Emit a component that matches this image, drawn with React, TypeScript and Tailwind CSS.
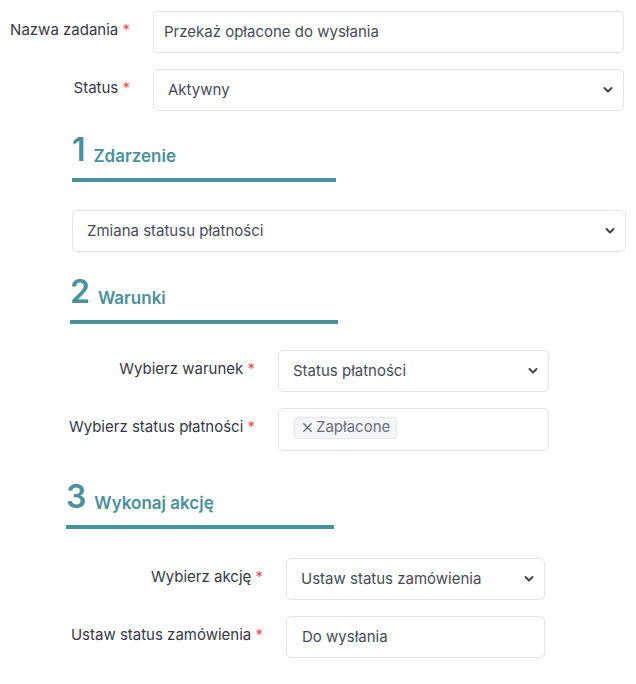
import { ReactNode } from 'react'

const Chevron = () => (
  <svg width="10" height="7" viewBox="0 0 10 7" className="pointer-events-none absolute right-[10px] top-1/2 -translate-y-1/2">
    <path d="M1.5 1.5 L5 5 L8.5 1.5" fill="none" stroke="#3f4350" strokeWidth="2" strokeLinecap="round" strokeLinejoin="round" />
  </svg>
)

function SelectBox({ value, className = '' }: { value: string; className?: string }) {
  return (
    <div className={`relative h-[42px] rounded-[5px] border border-[#e3e3eb] bg-white ${className}`}>
      <div className="flex h-full items-center pl-[14px] text-[#474a57]">{value}</div>
      <Chevron />
    </div>
  )
}

function InputBox({ value, pl = 'pl-[10px]' }: { value: string; pl?: string }) {
  return (
    <div className={`flex h-[42px] items-center rounded-[5px] border border-[#e3e3eb] bg-white ${pl} text-[#474a57]`}>
      {value}
    </div>
  )
}

function Row({ label, labelW, fieldW, children }: { label: string; labelW: string; fieldW: string; children: ReactNode }) {
  return (
    <div className="flex">
      <div className={`${labelW} shrink-0 pr-[23px] pt-[8px] text-right text-[#373743]`}>
        {label} <span className="text-[#f04c4c]">*</span>
      </div>
      <div className={fieldW}>{children}</div>
    </div>
  )
}

function Heading({ num, title, left, bar }: { num: string; title: string; left: string; bar: string }) {
  return (
    <div className={left}>
      <div className="flex items-end gap-[8px] text-[#4a9199]">
        <span className="text-[32px] font-semibold leading-none">{num}</span>
        <span className="pb-[1px] text-[17px] font-semibold leading-none">{title}</span>
      </div>
      <div className={`mt-[12px] h-[4px] ${bar} bg-[#4a9199]`} />
    </div>
  )
}

export default function App() {
  return (
    <div className="w-[636px] min-h-[684px] bg-white pt-[11px] font-['Inter',sans-serif] text-[15px]">
      <Row label="Nazwa zadania" labelW="w-[153px]" fieldW="w-[471px]">
        <InputBox value="Przekaż opłacone do wysłania" />
      </Row>
      <div className="mt-[16px]">
        <Row label="Status" labelW="w-[153px]" fieldW="w-[471px]">
          <SelectBox value="Aktywny" />
        </Row>
      </div>

      <div className="mt-[23px]">
        <Heading num="1" title="Zdarzenie" left="ml-[72px]" bar="w-[264px]" />
      </div>
      <div className="relative ml-[72px] mt-[28px] w-[554px]">
        <SelectBox value="" className="mt-[1px]" />
        <div className="absolute left-0 top-0 flex h-[42px] w-[296px] items-center rounded-l-[5px] border border-r-0 border-[#e3e3eb] bg-white pl-[14px] text-[#474a57]">
          Zmiana statusu płatności
        </div>
      </div>

      <div className="mt-[24px]">
        <Heading num="2" title="Warunki" left="ml-[70px]" bar="w-[268px]" />
      </div>
      <div className="mt-[26px]">
        <Row label="Wybierz warunek" labelW="w-[278px]" fieldW="w-[271px]">
          <SelectBox value="Status płatności" />
        </Row>
      </div>
      <div className="mt-[16px]">
        <Row label="Wybierz status płatności" labelW="w-[278px]" fieldW="w-[271px]">
          <div className="h-[43px] rounded-[5px] border border-[#e3e3eb] bg-white pl-[15px] pt-[7px]">
            <span className="inline-flex h-[22px] items-center gap-[4px] rounded-[4px] border border-[#e7e8ee] bg-[#f4f5f8] pl-[8px] pr-[6px] text-[#6b6e7a]">
              <svg width="9" height="9" viewBox="0 0 9 9">
                <path d="M0.8 0.8 L8.2 8.2 M8.2 0.8 L0.8 8.2" stroke="#6b6e7a" strokeWidth="1.4" strokeLinecap="round" />
              </svg>
              Zapłacone
            </span>
          </div>
        </Row>
      </div>

      <div className="mt-[30px]">
        <Heading num="3" title="Wykonaj akcję" left="ml-[66px]" bar="w-[268px]" />
      </div>
      <div className="mt-[29px]">
        <Row label="Wybierz akcję" labelW="w-[286px]" fieldW="w-[259px]">
          <SelectBox value="Ustaw status zamówienia" />
        </Row>
      </div>
      <div className="mt-[16px]">
        <Row label="Ustaw status zamówienia" labelW="w-[286px]" fieldW="w-[259px]">
          <InputBox value="Do wysłania" pl="pl-[15px]" />
        </Row>
      </div>
    </div>
  )
}
